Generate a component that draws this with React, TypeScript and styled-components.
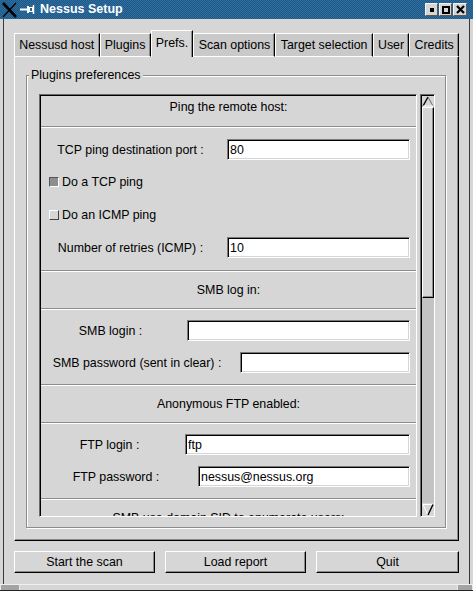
import React from "react";
import styled, { createGlobalStyle } from "styled-components";

const Global = createGlobalStyle`
  html, body { margin: 0; padding: 0; background: #d6d6d6; }
  body {
    font-family: "Liberation Sans", Arial, Helvetica, sans-serif;
    font-size: 12.4px;
    color: #000;
  }
  * { box-sizing: border-box; }
`;

const Window = styled.div`
  width: 473px;
  height: 591px;
  display: flex;
  flex-direction: column;
  background: #d6d6d6;
  overflow: hidden;
`;

const TitleBar = styled.div`
  height: 19px;
  flex: none;
  display: flex;
  align-items: center;
  background: repeating-conic-gradient(#1c5987 0 25%, #2f6e9f 0 50%) 0 0 / 2px 2px;
`;

const TitleText = styled.span`
  color: #fff;
  font-weight: bold;
  font-size: 12.5px;
  margin-left: 5px;
  line-height: 19px;
`;

const TitleButtons = styled.div`
  margin-left: auto;
  margin-right: 6px;
  display: flex;
  gap: 1px;
`;

const TitleButton = styled.div<{ $w?: number }>`
  width: ${(p) => p.$w ?? 13}px;
  height: 13px;
  background: #d6d6d6;
  border: 1px solid;
  border-color: #f4f4f4 #5a5a5a #5a5a5a #f4f4f4;
  display: flex;
  align-items: center;
  justify-content: center;
`;

const Body = styled.div`
  flex: 1;
  min-height: 0;
  display: flex;
  flex-direction: column;
  margin: 0 3px;
  border-left: 1px solid #3a3a3a;
  border-right: 1px solid #3a3a3a;
  padding: 11px 10px 11px;
`;

const TabRow = styled.div`
  display: flex;
  align-items: flex-end;
  height: 27px;
  flex: none;
`;

const Tab = styled.div<{ $active?: boolean }>`
  flex: 1 1 auto;
  display: flex;
  align-items: center;
  justify-content: center;
  white-space: nowrap;
  padding: 0 4px ${(p) => (p.$active ? 2 : 0)}px;
  height: ${(p) => (p.$active ? 27 : 24)}px;
  background: ${(p) => (p.$active ? "#d6d6d6" : "#c9c9c9")};
  border-top: 1px solid #fff;
  border-left: 1px solid #fff;
  border-right: 1px solid #000;
  border-bottom: ${(p) => (p.$active ? "none" : "1px solid #fff")};
  box-shadow: inset -1px 0 #8c8c8c;
`;

const Panel = styled.div`
  flex: 1;
  min-height: 0;
  display: flex;
  flex-direction: column;
  border-left: 1px solid #fff;
  border-right: 1px solid #000;
  border-bottom: 1px solid #000;
  box-shadow: inset -1px -1px #8c8c8c;
  padding: 18px 12px 12px 11px;
`;

const Group = styled.div`
  position: relative;
  flex: 1;
  min-height: 0;
  display: flex;
  border: 1px solid #8c8c8c;
  box-shadow: inset 1px 1px #fff, 1px 1px #fff;
  padding: 18px 10px 10px 12px;
`;

const GroupLabel = styled.span`
  position: absolute;
  top: -8px;
  left: 2px;
  padding: 0 2px;
  background: #d6d6d6;
  line-height: 14px;
`;

const Scrolled = styled.div`
  flex: 1;
  min-height: 0;
  display: flex;
  gap: 3px;
`;

const Viewport = styled.div`
  flex: 1;
  min-height: 0;
  overflow: hidden;
  display: flex;
  flex-direction: column;
  border: 1px solid;
  border-color: #6a6a6a #fff #fff #6a6a6a;
  box-shadow: inset 1px 1px #000;
  padding: 1px 0 0 1px;
`;

const Header = styled.div<{ $first?: boolean }>`
  height: ${(p) => (p.$first ? 30 : 36)}px;
  flex: none;
  display: flex;
  align-items: center;
  justify-content: center;
  padding-bottom: ${(p) => (p.$first ? 8 : 0)}px;
  line-height: 14px;
  white-space: nowrap;
`;

const Separator = styled.div`
  height: 2px;
  flex: none;
  border-top: 1px solid #8c8c8c;
  border-bottom: 1px solid #fff;
`;

const Section = styled.div<{ $pt: number; $pb: number }>`
  flex: none;
  display: flex;
  flex-direction: column;
  gap: 11px;
  padding: ${(p) => p.$pt}px 6px ${(p) => p.$pb}px 0;
`;

const FieldRow = styled.div`
  display: flex;
  align-items: center;
  gap: 7px;
  height: 21px;
`;

const FieldLabel = styled.div<{ $w: number }>`
  width: ${(p) => p.$w}px;
  flex: none;
  text-align: center;
  white-space: nowrap;
`;

const Entry = styled.input`
  flex: 1;
  min-width: 0;
  height: 21px;
  margin: 0;
  font: inherit;
  color: #000;
  background: #fff;
  padding: 0 0 0 2px;
  border: 1px solid;
  border-color: #7a7a7a #fff #fff #7a7a7a;
  box-shadow: inset 1px 1px #000, inset -1px -1px #d6d6d6;
  outline: none;
`;

const CheckRow = styled.div`
  display: flex;
  align-items: center;
  height: 22px;
  padding-left: 8px;
  gap: 3px;
`;

const CheckBox = styled.span<{ $on?: boolean }>`
  width: 10px;
  height: 10px;
  flex: none;
  border: 1px solid;
  border-color: ${(p) =>
    p.$on ? "#555 #fff #fff #555" : "#fff #444 #444 #fff"};
  background: ${(p) => (p.$on ? "#8e8e8e" : "#d6d6d6")};
`;

const ScrollBar = styled.div`
  width: 15px;
  flex: none;
  display: flex;
  flex-direction: column;
  border: 1px solid;
  border-color: #6a6a6a #fff #fff #6a6a6a;
  box-shadow: inset 1px 1px #000;
  padding: 1px 0 0 1px;
  background: #c3c3c3;
`;

const Stepper = styled.div<{ $h: number }>`
  height: ${(p) => p.$h}px;
  flex: none;
  background: #d6d6d6;
  display: flex;
  align-items: center;
  justify-content: center;
`;

const Thumb = styled.div`
  height: 191px;
  flex: none;
  background: #d6d6d6;
  border: 1px solid;
  border-color: #fff #000 #000 #fff;
  box-shadow: inset -1px -1px #8c8c8c;
`;

const Trough = styled.div`
  flex: 1;
`;

const ButtonRow = styled.div`
  display: grid;
  grid-template-columns: 141px 141px 1fr;
  gap: 10px;
  height: 22px;
  flex: none;
  margin-top: 10px;
`;

const Button = styled.button`
  font: inherit;
  color: #000;
  background: #d6d6d6;
  padding: 0;
  margin: 0;
  border: 1px solid;
  border-color: #fff #000 #000 #fff;
  box-shadow: inset -1px -1px #8c8c8c;
`;

const Handle = styled.div`
  height: 7px;
  flex: none;
  display: flex;
  justify-content: space-between;
  border-top: 1px solid #f0f0f0;
  border-bottom: 1px solid #222;
  background: #d6d6d6;
`;

const Grip = styled.div<{ $w: number }>`
  width: ${(p) => p.$w}px;
  background: #a4a4a4;
  border-left: 1px solid #e8e8e8;
  border-right: 1px solid #e8e8e8;
`;

const XLogo = () => (
  <svg width="18" height="16" viewBox="0 0 18 16" style={{ marginLeft: 1 }}>
    <path d="M2 1 L15 15" stroke="#000" strokeWidth="2.6" />
    <path d="M15 1 L2 15" stroke="#000" strokeWidth="1.2" />
  </svg>
);

const Pin = () => (
  <svg width="15" height="9" viewBox="0 0 15 9" style={{ marginLeft: 1 }}>
    <path d="M0 4.5 H7" stroke="#fff" strokeWidth="2" />
    <rect x="7" y="1" width="2" height="7" fill="#fff" />
    <rect x="9.5" y="2.5" width="3" height="4" fill="none" stroke="#fff" strokeWidth="1" />
    <path d="M13.5 0 V9" stroke="#fff" strokeWidth="1.5" />
  </svg>
);

const UpArrow = () => (
  <svg width="12" height="11" viewBox="0 0 12 11">
    <path d="M1 10 L6 1" stroke="#000" strokeWidth="1.4" fill="none" />
    <path d="M6 1 L11 10" stroke="#6a6a6a" strokeWidth="1" fill="none" />
    <path d="M1 10 H11" stroke="#fff" strokeWidth="1" fill="none" />
  </svg>
);

const DownArrow = () => (
  <svg width="12" height="13" viewBox="0 0 12 13">
    <path d="M1 1.5 H11" stroke="#fff" strokeWidth="1" fill="none" />
    <path d="M1 1.5 L6 12" stroke="#fff" strokeWidth="1" fill="none" />
    <path d="M11 1.5 L6 12" stroke="#000" strokeWidth="1.4" fill="none" />
  </svg>
);

export default function App() {
  return (
    <>
      <Global />
      <Window>
        <TitleBar>
          <XLogo />
          <Pin />
          <TitleText>Nessus Setup</TitleText>
          <TitleButtons>
            <TitleButton>
              <svg width="4" height="4"><rect width="4" height="4" fill="#000" /></svg>
            </TitleButton>
            <TitleButton>
              <svg width="8" height="8"><rect x="1" y="1" width="6" height="6" fill="none" stroke="#000" strokeWidth="2" /></svg>
            </TitleButton>
            <TitleButton $w={14}>
              <svg width="9" height="9"><path d="M1 1 L8 8 M8 1 L1 8" stroke="#000" strokeWidth="2.2" /></svg>
            </TitleButton>
          </TitleButtons>
        </TitleBar>
        <Body>
          <TabRow>
            <Tab>Nessusd host</Tab>
            <Tab>Plugins</Tab>
            <Tab $active>Prefs.</Tab>
            <Tab>Scan options</Tab>
            <Tab>Target selection</Tab>
            <Tab>User</Tab>
            <Tab>Credits</Tab>
          </TabRow>
          <Panel>
            <Group>
              <GroupLabel>Plugins preferences</GroupLabel>
              <Scrolled>
                <Viewport>
                  <Header $first>Ping the remote host:</Header>
                  <Separator />
                  <Section $pt={11} $pb={12}>
                    <FieldRow>
                      <FieldLabel $w={179}>TCP ping destination port :</FieldLabel>
                      <Entry defaultValue="80" readOnly />
                    </FieldRow>
                    <CheckRow>
                      <CheckBox $on />
                      Do a TCP ping
                    </CheckRow>
                    <CheckRow>
                      <CheckBox />
                      Do an ICMP ping
                    </CheckRow>
                    <FieldRow>
                      <FieldLabel $w={179}>Number of retries (ICMP) :</FieldLabel>
                      <Entry defaultValue="10" readOnly />
                    </FieldRow>
                  </Section>
                  <Separator />
                  <Header>SMB log in:</Header>
                  <Separator />
                  <Section $pt={10} $pb={11}>
                    <FieldRow>
                      <FieldLabel $w={139}>SMB login :</FieldLabel>
                      <Entry defaultValue="" readOnly />
                    </FieldRow>
                    <FieldRow>
                      <FieldLabel $w={192}>SMB password (sent in clear) :</FieldLabel>
                      <Entry defaultValue="" readOnly />
                    </FieldRow>
                  </Section>
                  <Separator />
                  <Header>Anonymous FTP enabled:</Header>
                  <Separator />
                  <Section $pt={10} $pb={11}>
                    <FieldRow>
                      <FieldLabel $w={137}>FTP login :</FieldLabel>
                      <Entry defaultValue="ftp" readOnly />
                    </FieldRow>
                    <FieldRow>
                      <FieldLabel $w={150}>FTP password :</FieldLabel>
                      <Entry defaultValue="nessus@nessus.org" readOnly />
                    </FieldRow>
                  </Section>
                  <Separator />
                  <Header>SMB use domain SID to enumerate users:</Header>
                </Viewport>
                <ScrollBar>
                  <Stepper $h={11}>
                    <UpArrow />
                  </Stepper>
                  <Thumb />
                  <Trough />
                  <Stepper $h={13}>
                    <DownArrow />
                  </Stepper>
                </ScrollBar>
              </Scrolled>
            </Group>
          </Panel>
          <ButtonRow>
            <Button>Start the scan</Button>
            <Button>Load report</Button>
            <Button>Quit</Button>
          </ButtonRow>
        </Body>
        <Handle>
          <Grip $w={20} />
          <Grip $w={16} />
        </Handle>
      </Window>
    </>
  );
}
